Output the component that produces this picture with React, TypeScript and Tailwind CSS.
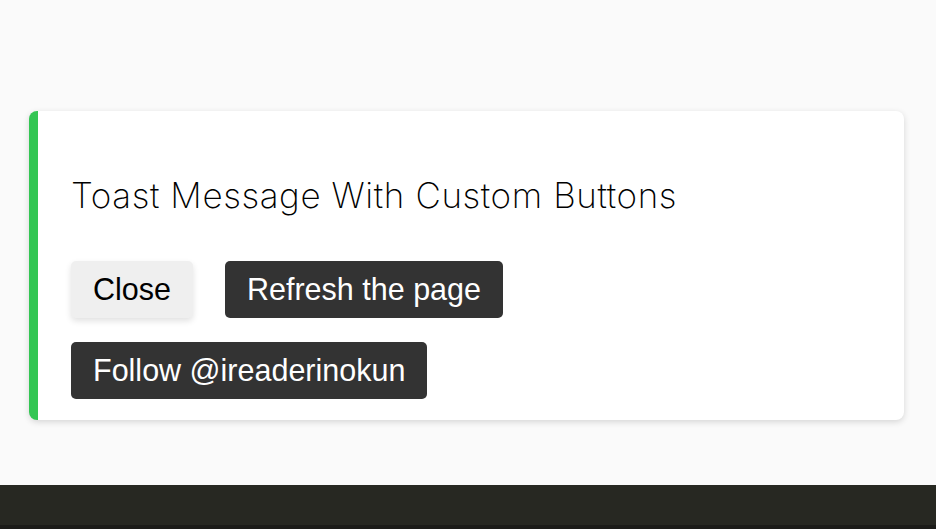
export default function App() {
  return (
    <div className="flex h-[529px] flex-col overflow-hidden bg-[#fafafa]">
      <div className="flex-1">
        <div className="ml-[29px] mt-[111px] flex h-[309px] w-[875px] flex-col rounded-lg border-l-[9px] border-[#33c653] bg-white pl-[33px] pt-[62px] shadow-[0_2px_6px_rgba(0,0,0,0.15)]">
          <h1 className="font-['Inter',sans-serif] text-[35px] font-extralight leading-[44px] tracking-[0.6px] text-black">
            Toast Message With Custom Buttons
          </h1>
          <div className="mt-[44px] flex flex-col gap-6 font-['Liberation_Sans',Arial,sans-serif] text-[30.5px] leading-[35px]">
            <div className="flex gap-8">
              <button className="rounded-[5px] bg-[#efefef] px-[22px] py-[11px] text-black shadow-[0_3px_6px_rgba(0,0,0,0.12)]">
                Close
              </button>
              <button className="rounded-[5px] bg-[#333333] px-[22px] py-[11px] text-white">
                Refresh the page
              </button>
            </div>
            <div className="flex">
              <button className="rounded-[5px] bg-[#333333] px-[22px] py-[11px] text-white">
                Follow @ireaderinokun
              </button>
            </div>
          </div>
        </div>
      </div>
      <div className="h-[40px] bg-[#272822]" />
      <div className="h-[4px] bg-[#1c1c19]" />
    </div>
  );
}
